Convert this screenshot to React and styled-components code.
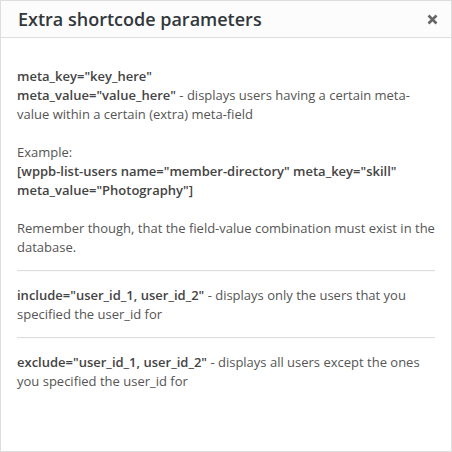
import React from "react";
import styled, { createGlobalStyle } from "styled-components";

const Global = createGlobalStyle`
  html, body { margin: 0; padding: 0; background: #fff; }
  body { font-family: "Open Sans", "Noto Sans", sans-serif; }
  * { box-sizing: border-box; }
`;

const Modal = styled.div`
  width: 452px;
  height: 452px;
  border: 1px solid #dddddd;
  background: #ffffff;
  display: flex;
  flex-direction: column;
`;

const Header = styled.header`
  height: 37px;
  flex: none;
  background: #fcfcfc;
  border-bottom: 1px solid #dddddd;
  display: flex;
  align-items: center;
  justify-content: space-between;
  padding: 0 13px 0 17px;
`;

const Title = styled.h1`
  margin: 0;
  font-size: 18px;
  line-height: 36px;
  font-weight: 600;
  color: #32373c;
`;

const Close = styled.button`
  border: 0;
  background: none;
  padding: 0;
  width: 12px;
  height: 12px;
  margin-top: 1px;
  display: flex;
  align-items: center;
  justify-content: center;
  color: #666;
  cursor: pointer;
`;

const Body = styled.div`
  padding: 29px 16px 0 16px;
  font-size: 13px;
  line-height: 19px;
  color: #555;
`;

const Para = styled.p`
  margin: 0;
  & + & { margin-top: 19px; }
`;

const Code = styled.strong`
  font-weight: 600;
  color: #444;
`;

const Rule = styled.hr`
  margin: 13px 0 14px;
  border: 0;
  border-top: 1px solid #dddddd;
  border-bottom: 1px solid #fafafa;
`;

export default function App() {
  return (
    <>
      <Global />
      <Modal>
        <Header>
          <Title>Extra shortcode parameters</Title>
          <Close aria-label="Close">
            <svg width="11" height="11" viewBox="0 0 11 11">
              <path d="M1.5 1.5 L9.5 9.5 M9.5 1.5 L1.5 9.5" stroke="currentColor" strokeWidth="2.6" strokeLinecap="butt" />
            </svg>
          </Close>
        </Header>
        <Body>
          <Para>
            <Code>meta_key="key_here"</Code>
            <br />
            <Code>meta_value="value_here"</Code> - displays users having a certain meta-value within a certain (extra) meta-field
          </Para>
          <Para>
            Example:
            <br />
            <Code>[wppb-list-users name="member-directory" meta_key="skill" meta_value="Photography"]</Code>
          </Para>
          <Para>Remember though, that the field-value combination must exist in the database.</Para>
          <Rule />
          <Para>
            <Code>include="user_id_1, user_id_2"</Code> - displays only the users that you specified the user_id for
          </Para>
          <Rule />
          <Para>
            <Code>exclude="user_id_1, user_id_2"</Code> - displays all users except the ones you specified the user_id for
          </Para>
        </Body>
      </Modal>
    </>
  );
}
